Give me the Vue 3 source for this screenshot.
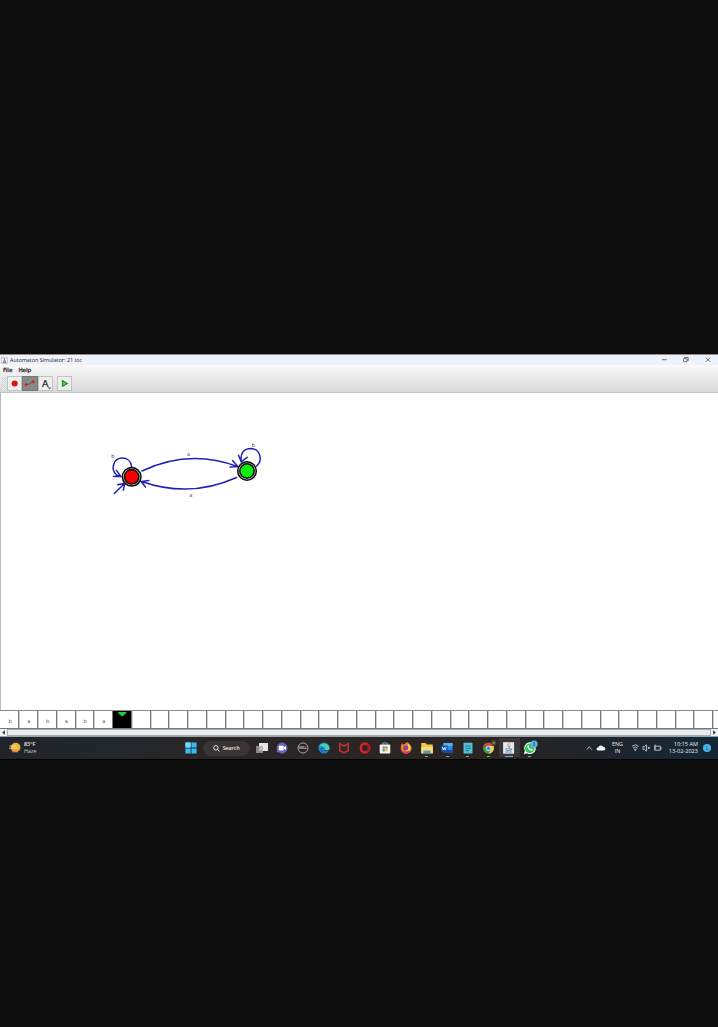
<script setup>
const symbols = ['b', 'a', 'b', 'a', 'b', 'a']
const cells = Array.from({ length: 39 }, (_, i) => ({ text: symbols[i] || '', head: i === 6 }))
</script>

<template>
  <main class="screen">
    <section class="desktop">
      <header class="titlebar">
        <svg class="java" viewBox="0 0 7 7"><rect x=".3" y=".3" width="6.4" height="6.4" fill="#e7ebef" stroke="#a9afb5" stroke-width=".5" /><path d="M3.6 1v3M2 4.2h3M1.7 5.5h3.6" stroke="#666d75" stroke-width=".8" fill="none" /></svg>
        <span class="title">Automaton Simulator: 21 toc</span>
        <svg class="controls" viewBox="0 0 54 10" fill="none" stroke="#454b50" stroke-width=".8">
          <path d="M2 4.7h4.6M46 2.7l4 4m0-4l-4 4" />
          <rect x="23.6" y="3.6" width="3.4" height="3.1" rx=".6" /><path d="M24.6 3.1v-.7h3.6v3.3h-.8" />
        </svg>
      </header>
      <div class="chrome">
        <nav class="menu"><span>File</span><span>Help</span></nav>
        <div class="tools">
          <span class="grip"></span>
          <button><svg viewBox="0 0 14 14"><circle cx="7.2" cy="7" r="3.3" fill="#d51616" /></svg></button>
          <button class="selected"><svg viewBox="0 0 14 14"><path d="M3.2 8.3Q7 8.1 10.7 5.2" fill="none" stroke="#59383a" stroke-width=".9" /><circle cx="3.2" cy="8.3" r="1.6" fill="#ce2929" /><circle cx="10.9" cy="5.2" r="1.6" fill="#ce2929" /></svg></button>
          <button class="letter"><span>A</span><svg viewBox="0 0 14 14"><path d="M9.3 11.3h4l-2 2z" fill="#285b35" /></svg></button>
          <button class="play"><svg viewBox="0 0 14 14"><path d="M4.8 3.9v6.2L10 7z" fill="#55d45b" stroke="#12851c" stroke-width="1.2" /></svg></button>
        </div>
      </div>
      <div class="canvas">
        <svg viewBox="0 393 718 317">
          <g fill="none" stroke="#2020b4" stroke-width="1.5" stroke-linecap="round">
            <path d="M142 471Q189 448.5 237.5 466.5M232.5 460.5l5.5 6-8 .5" />
            <path d="M236.5 477.5Q190 498.5 141.5 481.5M145.5 487l-4.5-5.5 7.8-1" />
            <path d="M131.7 467C131.2 461 127 458 121.8 458.1C112.8 458.7 110.6 469.5 116.5 475L120.7 476.4M113.5 476.4h7.4l-4.5-6" />
            <path d="M256.5 466C263 460.5 260.5 449 251 448.5C244 448.5 240 453 241.2 461.5M238.5 455.3l2.7 6.6 6-4.6" />
            <path d="M114.3 493.5L124.5 483.5M117.7 484.8l7.1-1.6-1.5 7" />
          </g>
          <g stroke="#090909" stroke-width="1.5">
            <circle cx="131.7" cy="476.8" r="9.3" fill="#e2e2e2" /><circle cx="131.7" cy="476.8" r="7.2" fill="#fb0000" />
            <circle cx="247" cy="471" r="9.3" fill="#e2e2e2" /><circle cx="247" cy="471" r="7.2" fill="#0bf00b" />
          </g>
          <g class="labels"><text x="113" y="458">b</text><text x="188.7" y="456">a</text><text x="190.8" y="497">a</text><text x="253.5" y="447.3">b</text></g>
        </svg>
      </div>
      <div class="tape">
        <div v-for="(cell, i) in cells" :key="i" class="cell" :class="{ head: cell.head }">
          <svg v-if="cell.head" viewBox="0 0 18 18"><path d="M5 1h8.5v1.3L9.3 5.9 5 2.3z" fill="#20ce31" /></svg>
          <span v-else>{{ cell.text }}</span>
        </div>
      </div>
      <div class="scroll">
        <svg viewBox="0 0 7 7"><path d="M4.8 1.2v4.6L2.2 3.5z" fill="#333" /></svg>
        <div></div>
        <svg viewBox="0 0 7 7"><path d="M2.2 1.2v4.6l2.6-2.3z" fill="#333" /></svg>
      </div>
      <footer class="taskbar">
        <div class="weather">
          <svg viewBox="0 0 14 14"><circle cx="7.7" cy="6.4" r="4.7" fill="#f2b43b" /><path d="M2 5h6M1.5 7.2h7" stroke="#f6d69b" stroke-width="1" stroke-linecap="round" /><path d="M2.5 9h9M4 10.8h6" stroke="#da9138" stroke-width=".9" /></svg>
          <div><b>83°F</b><span>Haze</span></div>
        </div>
        <div class="dock">
          <svg class="win" viewBox="0 0 12 12"><path d="M.4.4h5.2v5.2H.4zM6.4.4h5.2v5.2H6.4zM.4 6.4h5.2v5.2H.4zM6.4 6.4h5.2v5.2H6.4z" fill="#38bbee" /><path d="M.4.4h5.2v5.2H.4z" fill="#73d9f6" /></svg>
          <div class="search"><svg viewBox="0 0 7 7"><circle cx="2.9" cy="2.8" r="2.2" fill="none" stroke="#eee" stroke-width=".9" /><path d="M4.5 4.5l2 2" stroke="#eee" stroke-width="1" /></svg><span>Search</span></div>
          <div class="apps">
            <div><svg viewBox="0 0 20 20"><path d="M4 8h7v7H4z" fill="#888" /><path d="M7 5h9v8H7z" fill="#e5e5e3" /><path d="M7 8h4v5H7z" fill="#b4b4b2" /></svg></div>
            <div><svg viewBox="0 0 20 20"><path d="M10 4.5a5.5 5.5 0 1 1-4 9.3L4.8 15V10A5.4 5.4 0 0 1 10 4.5z" fill="#6468bd" /><rect x="6.7" y="7.7" width="5" height="4.7" rx="1" fill="#fff" /><path d="M12 9.2l2-1.2v4l-2-1.2z" fill="#fff" /></svg></div>
            <div><svg viewBox="0 0 20 20"><circle cx="10" cy="10" r="5" fill="#292526" stroke="#b5b0b0" stroke-width=".9" /><text x="10" y="11.3" text-anchor="middle" class="dell">DELL</text></svg></div>
            <div><svg viewBox="0 0 20 20"><circle cx="10" cy="10" r="5.6" fill="#188bd3" /><path d="M5 8.5A5.6 5.6 0 0 1 15.5 10c0 3-4 3.4-5 1.6 1.6-1.9-1.5-4.2-5.5-3.1z" fill="#4bd0a4" /><path d="M8.1 9.2C4.7 10.8 7.2 15.7 12 15.2c-2.9-.7-4.3-3.3-2.8-5.5z" fill="#1367ae" /><path d="M10.2 12q2 1.6 4.7.3" fill="none" stroke="#292526" stroke-width=".8" /></svg></div>
            <div><svg viewBox="0 0 20 20"><path d="M5.8 5.7v7l4.2 2 4.2-2v-7L10 8.1z" fill="none" stroke="#b92f32" stroke-width="1.7" /></svg></div>
            <div><svg viewBox="0 0 20 20"><ellipse cx="10" cy="10" rx="4.1" ry="4.5" fill="none" stroke="#df1f2a" stroke-width="2.5" /><path d="M12.6 6.2q3 3.8 0 7.6" fill="none" stroke="#a71721" stroke-width="1.5" /></svg></div>
            <div><svg viewBox="0 0 20 20"><path d="M7.7 7V5h4.6v2" fill="none" stroke="#55b5d8" stroke-width="1" /><rect x="4.7" y="6.5" width="10.6" height="9" rx="1" fill="#f5f6ef" /><path d="M7.6 8.5h2.2v2.2H7.6z" fill="#e9573d" /><path d="M10.3 8.5h2.2v2.2h-2.2z" fill="#66af45" /><path d="M7.6 11.2h2.2v2.2H7.6z" fill="#349ac7" /><path d="M10.3 11.2h2.2v2.2h-2.2z" fill="#e7b33a" /></svg></div>
            <div><svg viewBox="0 0 20 20"><path d="M10 5l2.1-1 .4 2.1c3 .8 4 5 2 7.5-2.2 3.1-7.6 2.7-9.2-.8C4 10 5 7 6 5l1.2 1.7z" fill="#f57a33" /><path d="M12 4.4c1.3 3 3.7 3.4 2.3 7-1 2.3-4.1 1.8-4.1 1.8l2-4z" fill="#f5d242" /><circle cx="9.7" cy="10" r="2.5" fill="#8845a2" /><path d="M5 10c1.1 5 6.4 4.4 9.2 2-.8 4.9-9 5.4-9.2-2" fill="#e53163" /></svg></div>
            <div class="running"><svg viewBox="0 0 20 20"><path d="M4.3 5h4.3l1.2 1.6h6v8.7H4.3z" fill="#f3c94b" /><path d="M4.3 9h11.5v6.3H4.3z" fill="#ffdc70" /><path d="M6.3 12.5h7.2v2.8H6.3z" fill="#479bcc" /></svg></div>
            <div class="running"><svg viewBox="0 0 20 20"><path d="M6.5 5h9v10h-9z" fill="#2b8ce0" /><path d="M6.5 5h9v3h-9z" fill="#54b5ef" /><path d="M6.5 12h9v3h-9z" fill="#174fa6" /><rect x="4" y="7.5" width="6.8" height="6" fill="#1755b0" /><path d="M5.4 9l.9 3 1-2.4 1 2.4.9-3" fill="none" stroke="#fff" stroke-width=".8" /></svg></div>
            <div class="running"><svg viewBox="0 0 20 20"><rect x="5.5" y="4.7" width="9" height="10.8" rx=".8" fill="#55bfd3" /><path d="M7.2 8h5.6M7.2 10.3h5.6M7.2 12.6h3.8" stroke="#236e83" stroke-width=".9" /></svg></div>
            <div class="running"><svg viewBox="0 0 20 20"><circle cx="9.5" cy="10.2" r="5.5" fill="#35a650" /><path d="M4.8 7.5a5.5 5.5 0 0 1 9.7.3H9.3l-2 4z" fill="#df453d" /><path d="M10 8h4.7c1.1 3.9-1.4 7.6-5.2 7.7l2.5-4.4z" fill="#f3ca40" /><circle cx="9.5" cy="10.2" r="2.5" fill="#fff" /><circle cx="9.5" cy="10.2" r="1.9" fill="#438ddd" /><circle cx="14.7" cy="5" r="2.7" fill="#4d413c" /><path d="M13.2 5h3M14.7 3.6v2" stroke="#a88b79" stroke-width=".8" /></svg></div>
            <div class="running active"><svg viewBox="0 0 20 20"><rect x="4.1" y="4.2" width="11" height="11.5" fill="#e6e9eb" /><path d="M10.3 5.3c-4 2.4 1 2.5-1 4.6M11.6 7.2c-2.4 1.2-.6 1.6-1.4 2.7" fill="none" stroke="#d76d4a" stroke-width=".9" /><path d="M6.6 10.8h5.2v1.6H7.4zM11.9 11h1.3l-1.4 1.3M6.1 14h6.8" fill="none" stroke="#5c85a4" stroke-width=".8" /></svg></div>
            <div class="running"><svg viewBox="0 0 20 20"><path d="M3.9 16.2l.9-3.3a5.9 5.9 0 1 1 2.2 2.3z" fill="#f1fff1" /><circle cx="9.8" cy="10.3" r="4.8" fill="#32bd59" /><path d="M7.5 7.5c-.9 2.7 2.5 5.8 4.9 5.1l.5-1.2-1.7-.9-.7.8-2-1.9.7-.8-.6-1.5z" fill="#fff" /><circle cx="14" cy="6" r="3.6" fill="#52bdec" /><text x="14" y="7.7" text-anchor="middle" class="badge">1</text></svg></div>
          </div>
        </div>
        <div class="tray">
          <svg class="status" viewBox="0 0 20 12"><path d="M.8 7.7l2.5-3 2.5 3" fill="none" stroke="#bcc1c6" stroke-width=".9" /><path d="M12 8.6a1.6 1.6 0 0 1 .3-3.2A2.8 2.8 0 0 1 17.5 5a1.8 1.8 0 0 1 .1 3.6z" fill="#f0f3f5" /></svg>
          <div class="lang"><span>ENG</span><span>IN</span></div>
          <svg class="network" viewBox="0 0 32 12" fill="none" stroke="#dce2e6" stroke-width=".8"><path d="M.9 4.3q3.4-3 6.8 0M2 6q2.3-2 4.6 0M3.2 7.6q1.1-1 2.2 0l-1.1 1z" /><path d="M12 4.6h1.4l2-1.8v6.4l-2-1.8H12zM16.8 4.7l2 2.4m0-2.4l-2 2.4M23.8 4.2h5.5v4h-5.5zM30.2 5.3v1.8M24 2.5v5" /></svg>
          <div class="clock"><span>10:15 AM</span><span>13-02-2023</span></div>
          <i>1</i>
        </div>
      </footer>
    </section>
  </main>
</template>

<style>
body { margin: 0; background: #0d0d0d; }
</style>
<style scoped>
* { box-sizing: border-box; }
.screen { height: 1027px; background: #0d0d0d; padding-top: 354px; overflow: hidden; font-family: "Open Sans", "Noto Sans", sans-serif; }
.desktop { width: 718px; height: 406px; background: #000; overflow: hidden; }
svg { display: block; flex: none; }
.titlebar { height: 11px; display: flex; align-items: center; background: #eef2f9; border-top: 1px solid #8b8b91; color: #25282b; font-size: 5.4px; }
.java { width: 7px; height: 7px; margin: 0 2px 0 1px; }
.title { line-height: 9px; white-space: nowrap; }
.controls { width: 54px; height: 10px; margin-left: auto; margin-right: 4px; }
.chrome { height: 28px; background: linear-gradient(#fafafa, #f0f0f0 30%, #d8d8d8); border-bottom: 1px solid #bfc4c8; }
.menu { height: 10px; display: flex; gap: 6px; padding-left: 3px; font: bold 5.5px/10px "DejaVu Sans", sans-serif; font: 5.6px/10px "DejaVu Sans", sans-serif; -webkit-text-stroke: .25px #222; color: #222; }
.tools { display: flex; height: 17px; align-items: center; padding-left: 2px; }
.grip { width: 4px; height: 14px; margin-right: 1px; background: repeating-conic-gradient(#ccd1d4 0 25%, #eee 0 50%) 0 0 / 2px 2px; }
button { width: 15.3px; height: 15px; padding: 0; border: 1px solid #c1c1c1; background: #eeeeed; display: flex; justify-content: center; align-items: center; position: relative; }
button svg { width: 13px; height: 13px; }
button.selected { background: #898989; border-color: #777; }
.letter span { font: 9.5px/13px "DejaVu Sans", sans-serif; color: #222; -webkit-text-stroke: .2px #222; }
.letter svg { position: absolute; inset: 0; }
.play { margin-left: 4px; }
.canvas { height: 317px; background: #fff; border-left: 1px solid #b5bac0; }
.canvas > svg { width: 718px; height: 317px; margin-left: -1px; }
.labels { font: 5.2px "DejaVu Sans", sans-serif; text-anchor: middle; fill: #444; }
.tape { height: 19px; width: 732px; display: grid; grid-template-columns: repeat(39, 18.76px); border-top: 1px solid #8a8a8a; border-bottom: 1px solid #777; background: #fff; padding-left: .6px; }
.cell { box-shadow: inset -1px 0 #777, 1px 0 #d0d0d0; display: flex; align-items: center; justify-content: center; color: #444; font: 5px "DejaVu Sans", sans-serif; padding-top: 2px; }
.head { background: #000; padding: 0; }
.head svg { width: 18px; height: 17px; }
.scroll { height: 8px; display: flex; background: #e4e7eb; border-bottom: 1px solid #98a3ad; }
.scroll svg { width: 7px; height: 7px; background: #eef0f3; }
.scroll div { flex: 1; border: 1px solid #a6adb5; background: #e8ebf1; }
.taskbar { height: 22px; background: linear-gradient(90deg, #20242a 0, #24272b 18%, #2b2525 29%, #2a2423 70%, #20242a 81%, #142737 100%); display: flex; align-items: center; color: #eee; font-size: 5.4px; line-height: 7px; }
.weather { width: 184.5px; display: flex; align-items: center; padding-left: 8px; gap: 2px; }
.weather > svg { width: 14px; height: 14px; }
.weather b, .weather span, .lang span, .clock span { display: block; }
.weather b { font-weight: 600; }
.weather span { color: #c9cbcd; }
.dock { display: flex; align-items: center; }
.win { width: 12px; height: 12px; }
.search { width: 46.5px; height: 15px; margin: 0 1.9px 0 6.5px; border-radius: 8px; background: #3a3435; display: flex; align-items: center; justify-content: center; gap: 3px; font-weight: 600; font-size: 5.2px; }
.search svg { width: 7px; height: 7px; }
.apps { display: grid; grid-template-columns: repeat(14, 20.63px); height: 22px; }
.apps > div { display: flex; justify-content: center; align-items: center; position: relative; }
.apps svg { width: 20px; height: 20px; }
.running::after { content: ""; position: absolute; bottom: 2px; width: 3px; height: 1px; background: #9b9898; }
.active { background: linear-gradient(transparent 1px, #3b3637 1px, #3b3637 20px, transparent 20px); }
.active::after { width: 8px; background: #5cb6e5; height: 1.5px; }
.dell { font: bold 3px "Liberation Sans", sans-serif; fill: #ccc; }
.badge { font: bold 4.8px "Liberation Sans", sans-serif; fill: #133c53; }
.tray { margin-left: auto; display: flex; align-items: center; padding-right: 7px; }
.status { width: 20px; height: 12px; margin-right: 6px; }
.lang { width: 12px; text-align: center; }
.network { width: 32px; height: 12px; margin: 0 3px 0 7.5px; }
.clock { width: 32px; text-align: right; white-space: nowrap; font-size: 5.6px; }
.clock span { margin-left: -4px; }
.tray i { width: 8px; height: 8px; margin-left: 5px; border-radius: 50%; background: #4cb5ed; color: #155074; font: 5px/8px "Liberation Sans", sans-serif; text-align: center; }
</style>
